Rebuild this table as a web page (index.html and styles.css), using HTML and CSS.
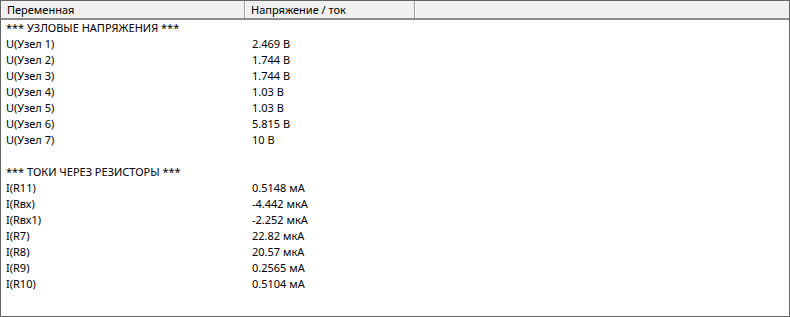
FILE: index.html
```html
<!DOCTYPE html>
<html lang="ru">
<head>
<meta charset="utf-8">
<link rel="stylesheet" href="styles.css">
</head>
<body>
<div class="list">
  <div class="header">
    <div class="hcell c1">Переменная</div>
    <div class="hcell c2">Напряжение / ток</div>
    <div class="hcell c3"></div>
  </div>
  <div class="rows">
    <div class="row"><span class="c1">*** УЗЛОВЫЕ НАПРЯЖЕНИЯ ***</span><span class="c2"></span></div>
    <div class="row"><span class="c1">U(Узел 1)</span><span class="c2">2.469 В</span></div>
    <div class="row"><span class="c1">U(Узел 2)</span><span class="c2">1.744 В</span></div>
    <div class="row"><span class="c1">U(Узел 3)</span><span class="c2">1.744 В</span></div>
    <div class="row"><span class="c1">U(Узел 4)</span><span class="c2">1.03 В</span></div>
    <div class="row"><span class="c1">U(Узел 5)</span><span class="c2">1.03 В</span></div>
    <div class="row"><span class="c1">U(Узел 6)</span><span class="c2">5.815 В</span></div>
    <div class="row"><span class="c1">U(Узел 7)</span><span class="c2">10 В</span></div>
    <div class="row"><span class="c1"></span><span class="c2"></span></div>
    <div class="row"><span class="c1">*** ТОКИ ЧЕРЕЗ РЕЗИСТОРЫ ***</span><span class="c2"></span></div>
    <div class="row"><span class="c1">I(R11)</span><span class="c2">0.5148 мА</span></div>
    <div class="row"><span class="c1">I(Rвх)</span><span class="c2">-4.442 мкА</span></div>
    <div class="row"><span class="c1">I(Rвх1)</span><span class="c2">-2.252 мкА</span></div>
    <div class="row"><span class="c1">I(R7)</span><span class="c2">22.82 мкА</span></div>
    <div class="row"><span class="c1">I(R8)</span><span class="c2">20.57 мкА</span></div>
    <div class="row"><span class="c1">I(R9)</span><span class="c2">0.2565 мА</span></div>
    <div class="row"><span class="c1">I(R10)</span><span class="c2">0.5104 мА</span></div>
  </div>
</div>
</body>
</html>
```
FILE: styles.css
```css
html, body {
  margin: 0;
  padding: 0;
  background: #ffffff;
}
body {
  font-family: "Noto Sans", "Open Sans", sans-serif;
  font-size: 11px;
  color: #000;
}
.list {
  width: 790px;
  height: 317px;
  box-sizing: border-box;
  border: 1px solid #646464;
  background: #fff;
  display: flex;
  flex-direction: column;
}
.header {
  display: flex;
  height: 19px;
  box-sizing: border-box;
  border-bottom: 2px solid #8c8c8c;
  background: #f0f0f0;
}
.hcell {
  box-sizing: border-box;
  height: 100%;
  border-right: 1px solid #a0a0a0;
  border-left: 1px solid #ffffff;
  padding-left: 5px;
  line-height: 17px;
  white-space: nowrap;
}
.header .c1 { width: 244px; }
.header .c2 { width: 170px; }
.header .c3 { flex: 1; border-right: none; }
.rows {
  display: flex;
  flex-direction: column;
}
.row {
  display: flex;
  height: 16px;
  line-height: 16px;
  white-space: nowrap;
}
.row .c1 {
  width: 245px;
  padding-left: 5px;
  box-sizing: border-box;
}
.row .c2 {
  width: 170px;
  padding-left: 6px;
  box-sizing: border-box;
}
```
